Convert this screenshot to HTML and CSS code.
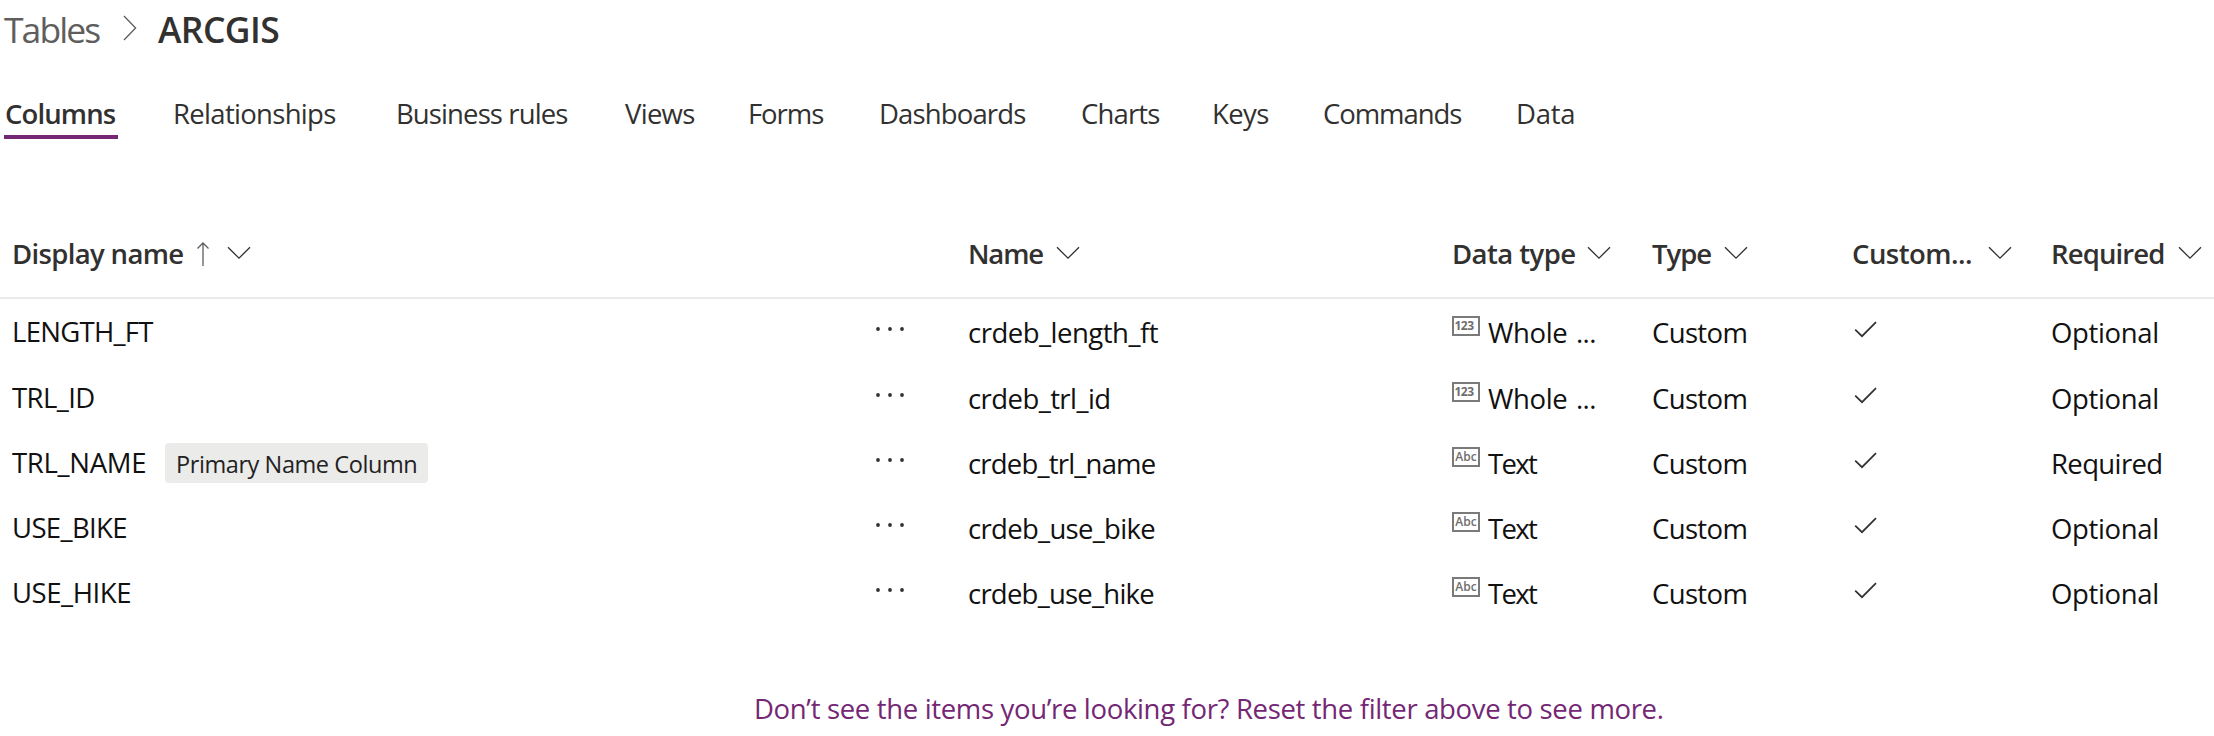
FILE: index.html
```html
<!DOCTYPE html>
<html lang="en">
<head>
<meta charset="utf-8">
<title>Tables - ARCGIS</title>
<link rel="stylesheet" href="styles.css">
</head>
<body>
<svg class="defs" width="0" height="0" aria-hidden="true">
  <symbol id="chevron" viewBox="0 0 24 14"><path d="M1 1.2 12 12.2 23 1.2" fill="none" stroke="#323130" stroke-width="1.3"/></symbol>
  <symbol id="check" viewBox="0 0 24 17"><path d="M1.2 8.6 8 15.2 22 1.2" fill="none" stroke="#323130" stroke-width="1.7"/></symbol>
  <symbol id="more" viewBox="0 0 30 6"><g fill="#323130"><circle cx="3" cy="3" r="1.9"/><circle cx="15" cy="3" r="1.9"/><circle cx="27" cy="3" r="1.9"/></g></symbol>
</svg>

<nav class="breadcrumb">
  <a class="crumb">Tables</a>
  <svg class="crumb-sep" viewBox="0 0 14 26"><path d="M1 1 12.6 13 1 25" fill="none" stroke="#605e5c" stroke-width="1.3"/></svg>
  <h1 class="crumb-current">ARCGIS</h1>
</nav>

<nav class="tabs">
  <a class="tab tab-active t-columns">Columns</a>
  <a class="tab t-relationships">Relationships</a>
  <a class="tab t-rules">Business rules</a>
  <a class="tab t-views">Views</a>
  <a class="tab t-forms">Forms</a>
  <a class="tab t-dashboards">Dashboards</a>
  <a class="tab t-charts">Charts</a>
  <a class="tab t-keys">Keys</a>
  <a class="tab t-commands">Commands</a>
  <a class="tab t-data">Data</a>
</nav>

<main class="table">
  <div class="row head">
    <div class="cell"><span class="h-display">Display name</span>
      <svg class="sort" viewBox="0 0 14 26"><path d="M7 25V2M1.5 7.500 7 2l5.500 5.500" fill="none" stroke="#605e5c" stroke-width="1.3"/></svg>
      <svg class="chev"><use href="#chevron"/></svg></div>
    <div class="cell"></div>
    <div class="cell"><span class="h-name">Name</span><svg class="chev"><use href="#chevron"/></svg></div>
    <div class="cell"><span class="h-datatype">Data type</span><svg class="chev"><use href="#chevron"/></svg></div>
    <div class="cell"><span class="h-type">Type</span><svg class="chev"><use href="#chevron"/></svg></div>
    <div class="cell"><span class="h-custom">Custom...</span><svg class="chev"><use href="#chevron"/></svg></div>
    <div class="cell"><span class="h-required">Required</span><svg class="chev"><use href="#chevron"/></svg></div>
  </div>
  <div class="row first">
    <div class="cell"><span class="d-length">LENGTH_FT</span></div>
    <div class="cell"><svg class="more"><use href="#more"/></svg></div>
    <div class="cell low"><span class="n-length">crdeb_length_ft</span></div>
    <div class="cell low"><span class="kind num">123</span><span class="whole">Whole</span><span class="dots">...</span></div>
    <div class="cell low"><span class="custom">Custom</span></div>
    <div class="cell"><svg class="check"><use href="#check"/></svg></div>
    <div class="cell low"><span class="optional">Optional</span></div>
  </div>
  <div class="row">
    <div class="cell"><span class="d-id">TRL_ID</span></div>
    <div class="cell"><svg class="more"><use href="#more"/></svg></div>
    <div class="cell low"><span class="n-id">crdeb_trl_id</span></div>
    <div class="cell low"><span class="kind num">123</span><span class="whole">Whole</span><span class="dots">...</span></div>
    <div class="cell low"><span class="custom">Custom</span></div>
    <div class="cell"><svg class="check"><use href="#check"/></svg></div>
    <div class="cell low"><span class="optional">Optional</span></div>
  </div>
  <div class="row">
    <div class="cell"><span class="d-name">TRL_NAME</span><span class="badge">Primary Name Column</span></div>
    <div class="cell"><svg class="more"><use href="#more"/></svg></div>
    <div class="cell low"><span class="n-name">crdeb_trl_name</span></div>
    <div class="cell low"><span class="kind">Abc</span><span class="text">Text</span></div>
    <div class="cell low"><span class="custom">Custom</span></div>
    <div class="cell"><svg class="check"><use href="#check"/></svg></div>
    <div class="cell low"><span class="required">Required</span></div>
  </div>
  <div class="row">
    <div class="cell"><span class="d-bike">USE_BIKE</span></div>
    <div class="cell"><svg class="more"><use href="#more"/></svg></div>
    <div class="cell low"><span class="n-bike">crdeb_use_bike</span></div>
    <div class="cell low"><span class="kind">Abc</span><span class="text">Text</span></div>
    <div class="cell low"><span class="custom">Custom</span></div>
    <div class="cell"><svg class="check"><use href="#check"/></svg></div>
    <div class="cell low"><span class="optional">Optional</span></div>
  </div>
  <div class="row">
    <div class="cell"><span class="d-hike">USE_HIKE</span></div>
    <div class="cell"><svg class="more"><use href="#more"/></svg></div>
    <div class="cell low"><span class="n-hike">crdeb_use_hike</span></div>
    <div class="cell low"><span class="kind">Abc</span><span class="text">Text</span></div>
    <div class="cell low"><span class="custom">Custom</span></div>
    <div class="cell"><svg class="check"><use href="#check"/></svg></div>
    <div class="cell low"><span class="optional">Optional</span></div>
  </div>
</main>

<footer class="footer"><a class="reset">Don’t see the items you’re looking for? Reset the filter above to see more.</a></footer>
</body>
</html>
```
FILE: styles.css
```css
* { box-sizing: border-box; }
body {
  margin: 0;
  width: 2214px;
  height: 736px;
  overflow: hidden;
  background: #fff;
  color: #111;
  font-family: "Open Sans", "Noto Sans", sans-serif;
  font-size: 27.5px;
  white-space: nowrap;
}
svg { display: block; flex: none; }
.defs { position: absolute; }

.breadcrumb {
  display: grid;
  grid-template-columns: 119px 35px 1fr;
  align-items: center;
  height: 92px;
  padding: 1px 0 35px 4px;
  font-size: 35.5px;
  line-height: 56px;
}
.crumb { color: #605e5c; letter-spacing: -1.95px; }
.crumb-sep { width: 14px; height: 26px; margin-bottom: 2px; }
.crumb-current { margin: 0; font-size: inherit; font-weight: 600; color: #323130; letter-spacing: -0.6px; }

.tabs {
  display: grid;
  grid-template-columns: 169px 223px 229px 123px 131px 202px 131px 111px 193px 1fr;
  height: 118px;
  padding-left: 4px;
  color: #323130;
  line-height: 43px;
}
.tab { height: 47px; }
.tab-active { width: 114px; padding-left: 1px; font-weight: 600; border-bottom: 4px solid #742774; }
.t-columns { letter-spacing: -0.88px; }
.t-relationships { letter-spacing: -0.69px; }
.t-rules { letter-spacing: -0.89px; }
.t-views { letter-spacing: -0.72px; }
.t-forms { letter-spacing: -1.07px; }
.t-dashboards { letter-spacing: -0.86px; }
.t-charts { letter-spacing: -0.86px; }
.t-keys { letter-spacing: -0.62px; }
.t-commands { letter-spacing: -1.08px; }
.t-data { letter-spacing: -0.29px; }

.row {
  display: grid;
  grid-template-columns: 863px 93px 484px 200px 200px 199px 1fr;
  height: 65px;
  padding-left: 12px;
}
.row.first { height: 66px; padding-bottom: 2px; }
.row.head { height: 89px; border-bottom: 2px solid #eaeaea; font-weight: 600; color: #323130; }
.cell { display: flex; align-items: center; }
.low { padding-top: 2px; }

.chev { width: 24px; height: 14px; margin-bottom: 2px; }
.sort { width: 14px; height: 26px; margin-right: 17px; }
.h-display { width: 184px; letter-spacing: -0.65px; }
.h-name { width: 88px; letter-spacing: -1.17px; }
.h-datatype { width: 135px; letter-spacing: -0.56px; }
.h-type { width: 72px; letter-spacing: -1.02px; }
.h-custom { width: 136px; letter-spacing: -0.52px; }
.h-required { width: 127px; letter-spacing: -0.88px; }

.more { width: 30px; height: 6px; margin-bottom: 5px; }
.check { width: 24px; height: 17px; margin: 0 0 4px 2px; }
.d-length { letter-spacing: -0.72px; }
.d-id { letter-spacing: -0.57px; }
.d-name { width: 153px; letter-spacing: -0.3px; }
.d-bike { letter-spacing: -0.64px; }
.d-hike { letter-spacing: -0.43px; }
.badge {
  width: 263px;
  height: 40px;
  padding-left: 11px;
  border-radius: 4px;
  background: #ebebea;
  color: #222;
  font-size: 23.5px;
  line-height: 43px;
  letter-spacing: -0.42px;
}
.n-length { letter-spacing: -0.5px; }
.n-id { letter-spacing: -0.57px; }
.n-name { letter-spacing: -0.8px; }
.n-bike { letter-spacing: -0.69px; }
.n-hike { letter-spacing: -0.77px; }
.kind {
  width: 28px;
  height: 20px;
  margin: 0 8px 13px 0;
  border: 2px solid #7a7a7a;
  color: #6e6e6e;
  font-size: 12px;
  font-weight: 600;
  line-height: 16px;
  text-align: center;
}
.num { padding-right: 4px; font-weight: 700; letter-spacing: -0.5px; }
.whole { width: 88px; letter-spacing: -0.36px; }
.dots { letter-spacing: -0.6px; }
.text { letter-spacing: -1.7px; }
.custom { letter-spacing: -0.65px; }
.optional { letter-spacing: -0.36px; }
.required { letter-spacing: -0.63px; }

.footer { padding: 64px 0 0 754px; line-height: 40px; }
.reset { color: #742774; letter-spacing: -0.335px; }
```
